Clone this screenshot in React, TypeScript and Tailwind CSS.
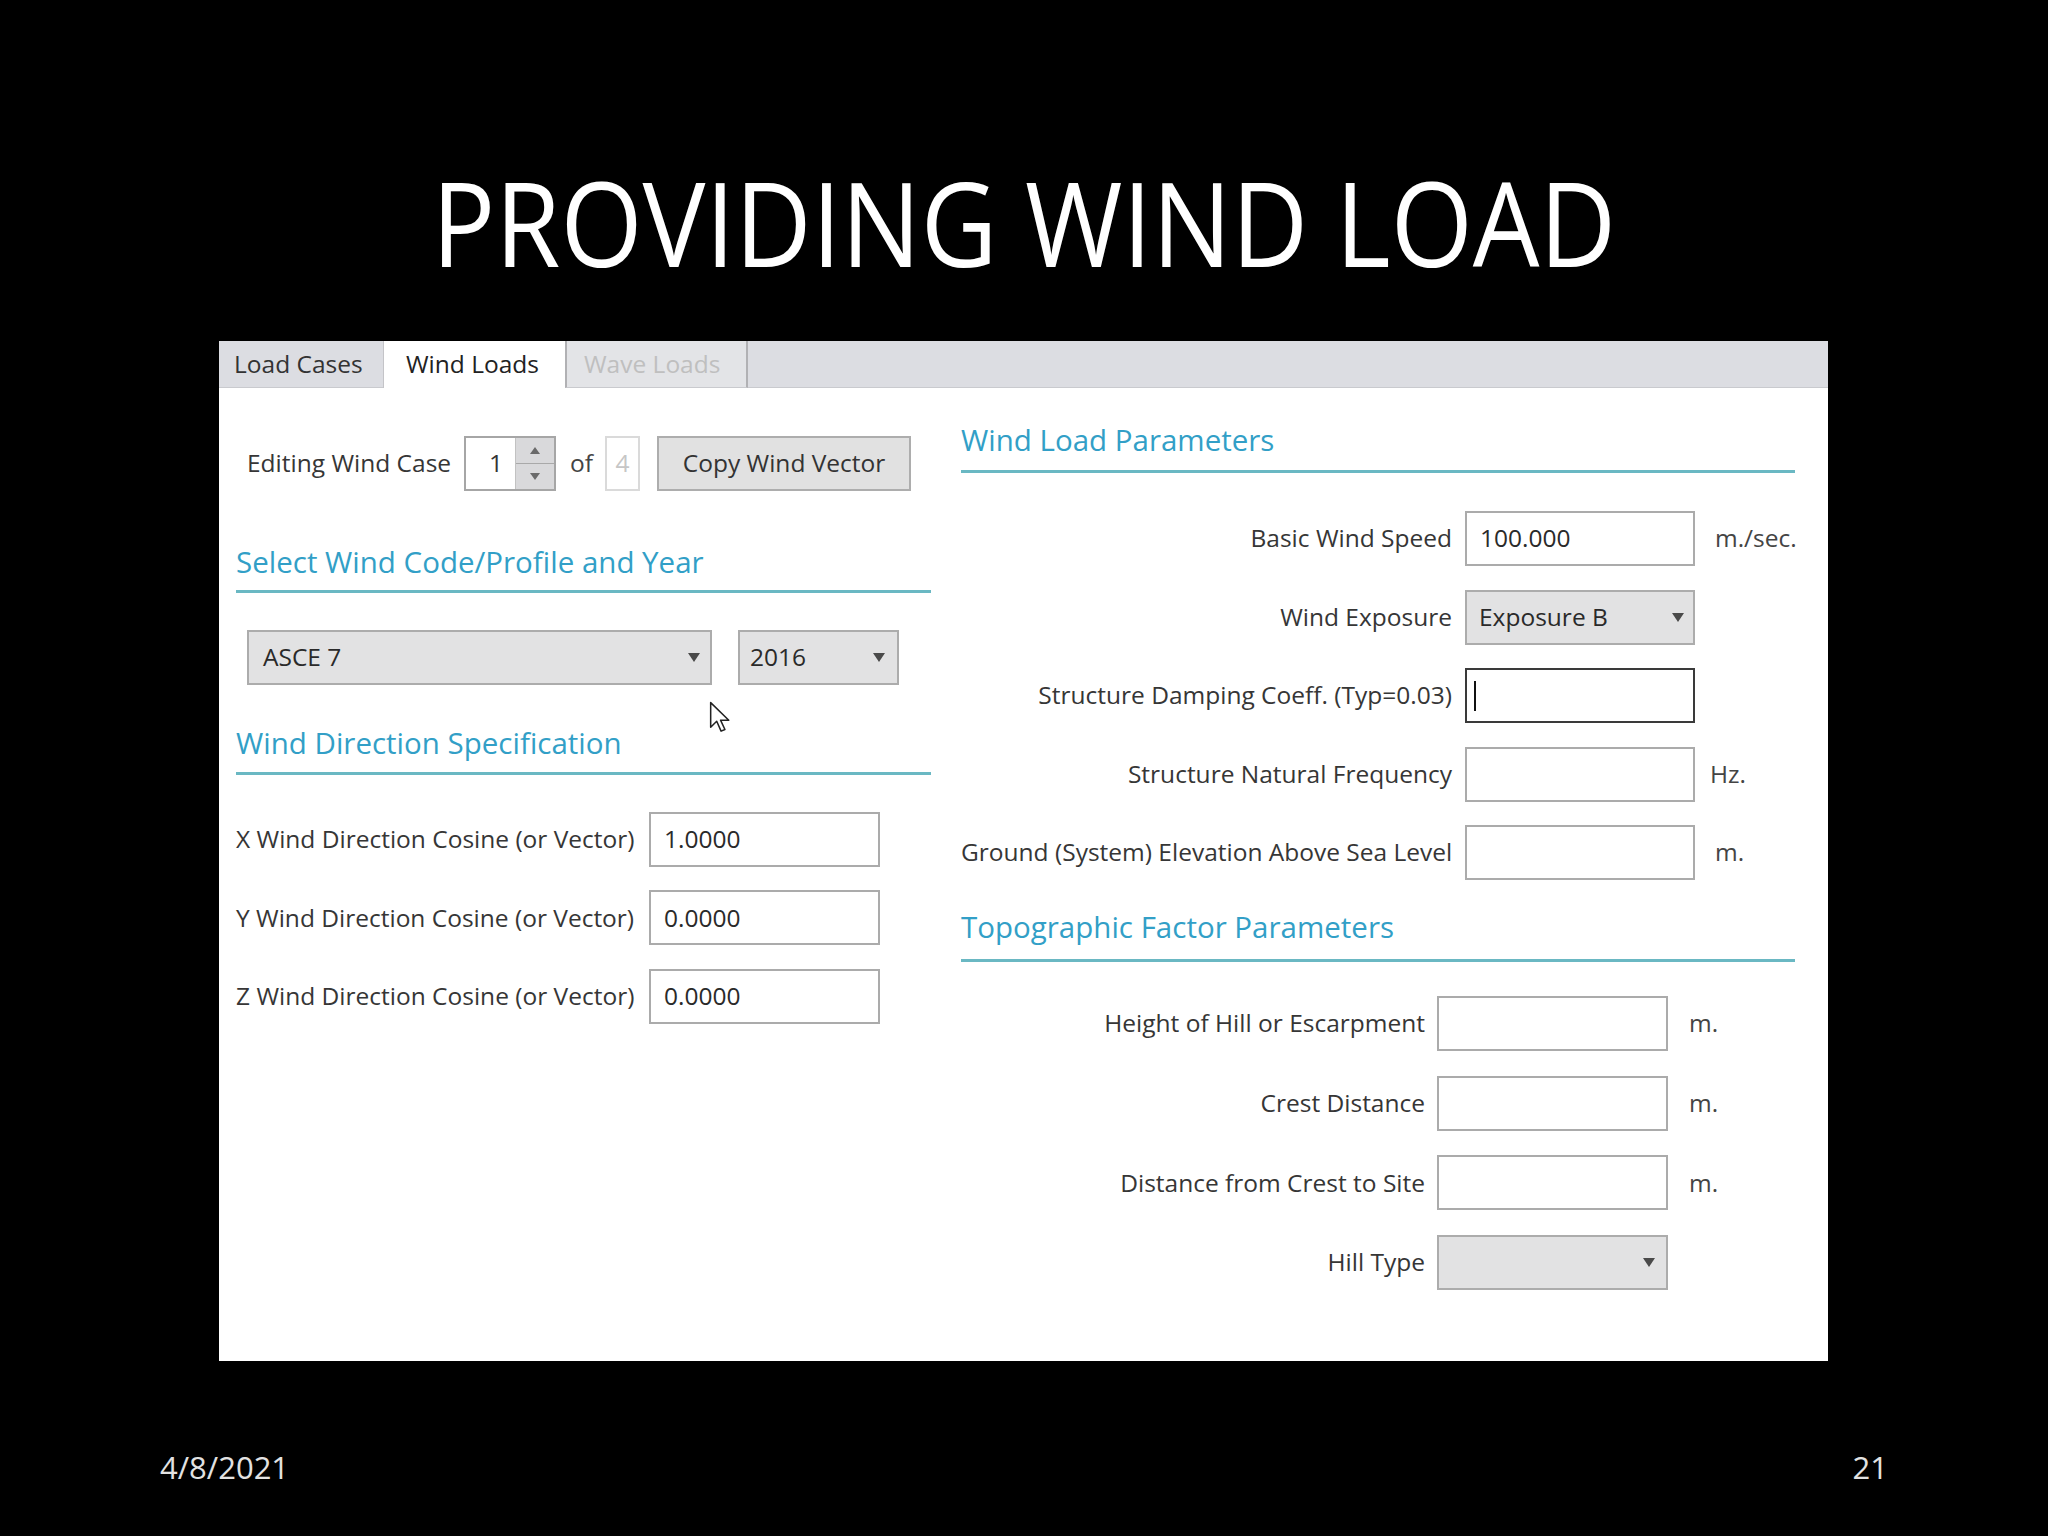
import React from "react";

const Arrow = () => (
  <svg width="14" height="11" viewBox="0 0 14 11" className="shrink-0">
    <path d="M1 1 L13 1 L7 10 Z" fill="#4a4a4a" />
  </svg>
);

const Field = ({
  w,
  value,
  focused,
}: {
  w: string;
  value?: string;
  focused?: boolean;
}) => (
  <div
    className={`${w} h-[55px] bg-white flex items-center shrink-0 ${
      focused ? "border-2 border-[#3a3a3a] pl-[7px]" : "border-2 border-[#ababab] pl-[13px]"
    } text-[24.5px] text-[#2a2a2a]`}
  >
    {focused ? <div className="w-[2px] h-[30px] bg-[#111]" /> : value}
  </div>
);

const Drop = ({
  w,
  value,
  pl,
  pr,
}: {
  w: string;
  value?: string;
  pl: string;
  pr: string;
}) => (
  <div
    className={`${w} ${pl} ${pr} h-[55px] bg-[#e2e2e3] border-2 border-[#acacac] flex items-center justify-between shrink-0 text-[24.5px] text-[#2a2a2a]`}
  >
    <span>{value ?? ""}</span>
    <Arrow />
  </div>
);

const Heading = ({ children, mt }: { children: React.ReactNode; mt: string }) => (
  <div className={`${mt} h-[36px] leading-[36px] text-[29.5px] font-medium text-[#329fc7] whitespace-nowrap`}>
    {children}
  </div>
);

const Rule = ({ w, mt }: { w: string; mt: string }) => (
  <div className={`${mt} ${w} h-[3px] bg-[#6ab8c3]`} />
);

const RightRow = ({
  label,
  lw,
  children,
  unit,
  fgap,
  ugap,
}: {
  label: string;
  lw: string;
  children: React.ReactNode;
  unit?: string;
  fgap: string;
  ugap: string;
}) => (
  <div className="h-[55px] flex items-center">
    <div className={`${lw} text-right text-[24.5px] text-[#363636] whitespace-nowrap shrink-0`}>{label}</div>
    <div className={`${fgap}`}>{children}</div>
    {unit && <div className={`${ugap} text-[24.5px] text-[#444]`}>{unit}</div>}
  </div>
);

export default function App() {
  return (
    <div className="w-[2048px] h-[1536px] bg-black flex flex-col overflow-hidden font-['Open_Sans',sans-serif]">
      <div className="mt-[163px] h-[118px] text-[118px] leading-none text-white text-center whitespace-nowrap scale-x-[0.895]">
        PROVIDING WIND LOAD
      </div>

      <div className="mt-[60px] ml-[219px] w-[1609px] h-[1020px] bg-white flex flex-col relative">
        {/* tabs */}
        <div className="h-[47px] bg-[#dcdde2] flex items-stretch text-[24.5px] shrink-0">
          <div className="w-[164px] pl-[15px] flex items-center text-[#333] border-b border-[#c9cace]">
            Load Cases
          </div>
          <div className="w-[182px] pl-[22px] flex items-center bg-white text-[#222] border-l border-[#c4c4c8]">
            Wind Loads
          </div>
          <div className="w-[183px] pl-[17px] flex items-center bg-[#e3e4e7] text-[#bfbfbf] border-x-2 border-[#b1b1b4] border-b border-b-[#c9cace]">
            Wave Loads
          </div>
          <div className="flex-1 border-b border-[#c9cace]" />
        </div>

        <div className="flex flex-1">
          {/* left column */}
          <div className="w-[742px] pl-[17px] flex flex-col">
            <div className="mt-[48px] h-[55px] pl-[11px] flex items-center text-[24.5px] text-[#363636]">
              <span className="whitespace-nowrap">Editing Wind Case</span>
              <div className="ml-[13px] w-[92px] h-[55px] border-2 border-[#a6a6a6] flex">
                <div className="flex-1 bg-white flex items-center justify-end pr-[12px] text-[#333]">1</div>
                <div className="w-[39px] bg-[#d9d9db] border-l border-[#c2c2c2] flex flex-col">
                  <div className="flex-1 flex items-center justify-center border-b border-[#a9a9a9]">
                    <svg width="10" height="7" viewBox="0 0 10 7">
                      <path d="M5 0 L10 7 L0 7 Z" fill="#6a6a6a" />
                    </svg>
                  </div>
                  <div className="flex-1 flex items-center justify-center">
                    <svg width="10" height="7" viewBox="0 0 10 7">
                      <path d="M0 0 L10 0 L5 7 Z" fill="#6a6a6a" />
                    </svg>
                  </div>
                </div>
              </div>
              <span className="ml-[14px] text-[#444]">of</span>
              <div className="ml-[12px] w-[35px] h-[55px] border-2 border-[#dadada] flex items-center justify-center text-[#c6c6c6]">
                4
              </div>
              <div className="ml-[17px] w-[254px] h-[55px] bg-[#e1e1e1] border-2 border-[#adadad] flex items-center justify-center text-[#333] whitespace-nowrap">
                Copy Wind Vector
              </div>
            </div>

            <Heading mt="mt-[53px]">Select Wind Code/Profile and Year</Heading>
            <Rule mt="mt-[10px]" w="w-[695px]" />

            <div className="mt-[37px] pl-[11px] flex gap-[26px]">
              <Drop w="w-[465px]" value="ASCE 7" pl="pl-[14px]" pr="pr-[9px]" />
              <Drop w="w-[161px]" value="2016" pl="pl-[10px]" pr="pr-[11px]" />
            </div>

            <Heading mt="mt-[40px]">Wind Direction Specification</Heading>
            <Rule mt="mt-[11px]" w="w-[695px]" />

            <div className="mt-[37px] flex flex-col gap-[23.4px]">
              {[
                ["X Wind Direction Cosine (or Vector)", "1.0000"],
                ["Y Wind Direction Cosine (or Vector)", "0.0000"],
                ["Z Wind Direction Cosine (or Vector)", "0.0000"],
              ].map(([l, v]) => (
                <div key={l} className="h-[55px] flex items-center">
                  <div className="w-[413px] text-[24.5px] text-[#363636] whitespace-nowrap shrink-0">{l}</div>
                  <Field w="w-[231px]" value={v} />
                </div>
              ))}
            </div>
          </div>

          {/* right column */}
          <div className="w-[834px] flex flex-col">
            <Heading mt="mt-[34px]">Wind Load Parameters</Heading>
            <Rule mt="mt-[12px]" w="w-[834px]" />

            <div className="mt-[38px] flex flex-col gap-[23.5px]">
              <RightRow label="Basic Wind Speed" lw="w-[491px]" fgap="ml-[13px]" ugap="ml-[20px]" unit="m./sec.">
                <Field w="w-[230px]" value="100.000" />
              </RightRow>
              <RightRow label="Wind Exposure" lw="w-[491px]" fgap="ml-[13px]" ugap="ml-[20px]">
                <Drop w="w-[230px]" value="Exposure B" pl="pl-[12px]" pr="pr-[8px]" />
              </RightRow>
              <RightRow label="Structure Damping Coeff. (Typ=0.03)" lw="w-[491px]" fgap="ml-[13px]" ugap="ml-[20px]">
                <Field w="w-[230px]" focused />
              </RightRow>
              <RightRow label="Structure Natural Frequency" lw="w-[491px]" fgap="ml-[13px]" ugap="ml-[15px]" unit="Hz.">
                <Field w="w-[230px]" />
              </RightRow>
              <RightRow label="Ground (System) Elevation Above Sea Level" lw="w-[491px]" fgap="ml-[13px]" ugap="ml-[20px]" unit="m.">
                <Field w="w-[230px]" />
              </RightRow>
            </div>

            <Heading mt="mt-[29px]">Topographic Factor Parameters</Heading>
            <Rule mt="mt-[14px]" w="w-[834px]" />

            <div className="mt-[34px] flex flex-col gap-[24.7px]">
              <RightRow label="Height of Hill or Escarpment" lw="w-[464px]" fgap="ml-[12px]" ugap="ml-[21px]" unit="m.">
                <Field w="w-[231px]" />
              </RightRow>
              <RightRow label="Crest Distance" lw="w-[464px]" fgap="ml-[12px]" ugap="ml-[21px]" unit="m.">
                <Field w="w-[231px]" />
              </RightRow>
              <RightRow label="Distance from Crest to Site" lw="w-[464px]" fgap="ml-[12px]" ugap="ml-[21px]" unit="m.">
                <Field w="w-[231px]" />
              </RightRow>
              <RightRow label="Hill Type" lw="w-[464px]" fgap="ml-[12px]" ugap="ml-[21px]">
                <Drop w="w-[231px]" pl="pl-[12px]" pr="pr-[10px]" />
              </RightRow>
            </div>
          </div>
        </div>

        {/* mouse pointer */}
        <svg
          className="absolute left-[490px] top-[360px]"
          width="22"
          height="34"
          viewBox="0 0 20 31"
        >
          <path
            d="M1.5 1.5 L1.5 24 L7 18.5 L11 27.5 L14.5 26 L10.5 17.5 L18 17.5 Z"
            fill="white"
            stroke="#222"
            strokeWidth="1.4"
            strokeLinejoin="round"
          />
        </svg>
      </div>

      <div className="mt-[91px] px-[160px] flex justify-between text-[31px] leading-none text-[#e2e2e2]">
        <span>4/8/2021</span>
        <span>21</span>
      </div>
    </div>
  );
}
